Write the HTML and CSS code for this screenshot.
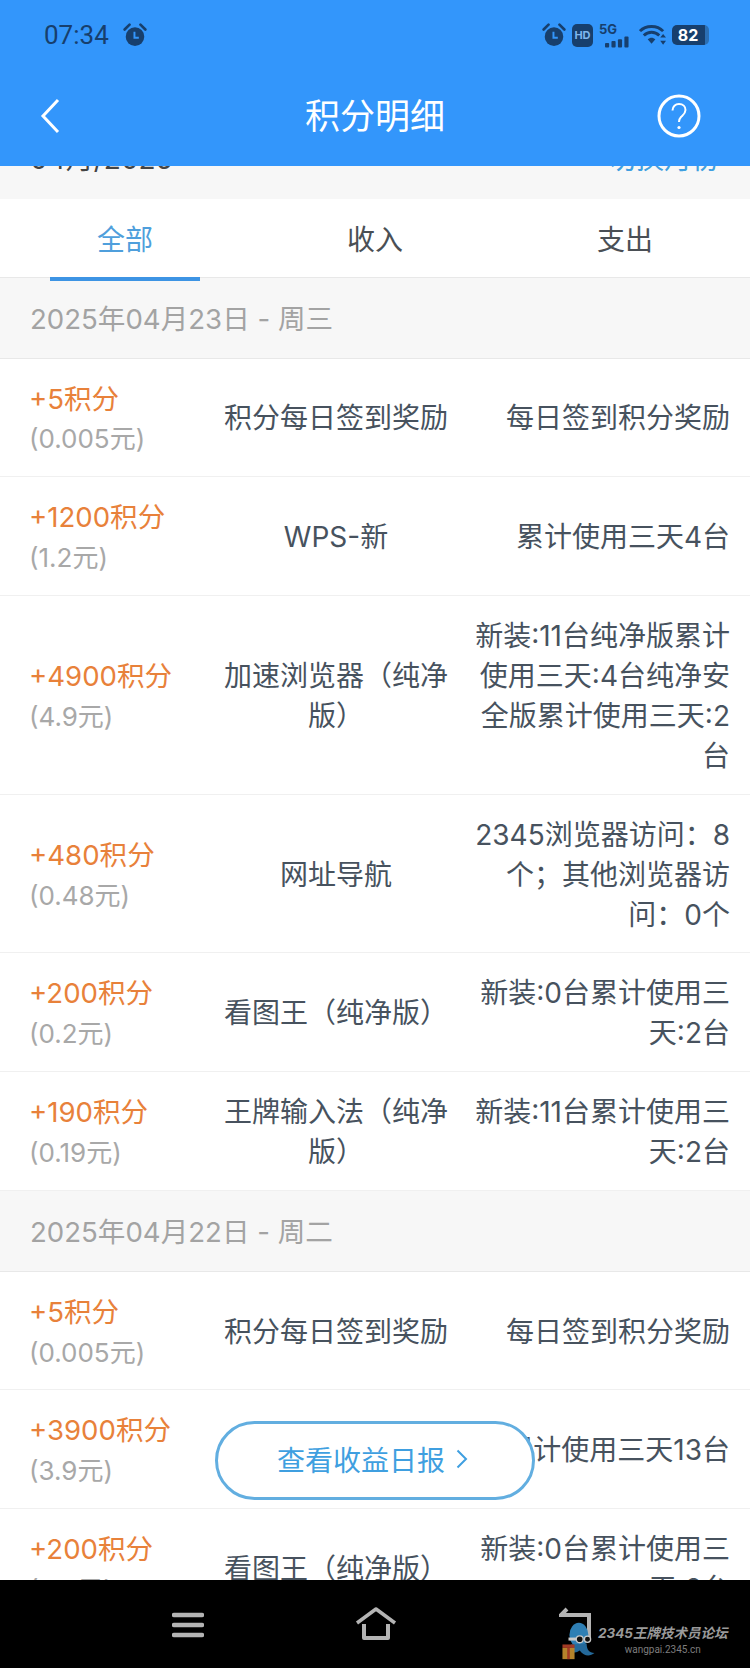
FILE: index.html
```html
<!DOCTYPE html>
<html lang="zh-CN">
<head>
    <meta charset="utf-8">
    <title>积分明细</title>
    <link rel="stylesheet" href="styles.css">
</head>
<body>
    <div class="page">
        <div class="top">
            <div class="status-bar">
                <div class="status-left">
                    <span class="time">07:34</span>
                    <svg class="alarm" width="24" height="24" viewBox="0 0 22 22">
                        <circle cx="11" cy="12.5" r="8.5" fill="#173f6d"/>
                        <path d="M1.5 6 L6 1.5 M20.5 6 L16 1.5" stroke="#173f6d" stroke-width="2.4" stroke-linecap="round"/>
                        <path d="M10.5 8 V13.5 H14.5" stroke="#3396fb" stroke-width="1.8" fill="none"/>
                    </svg>
                </div>
                <div class="status-right">
                    <svg class="alarm" width="24" height="24" viewBox="0 0 22 22">
                        <circle cx="11" cy="12.5" r="8.5" fill="#173f6d"/>
                        <path d="M1.5 6 L6 1.5 M20.5 6 L16 1.5" stroke="#173f6d" stroke-width="2.4" stroke-linecap="round"/>
                        <path d="M10.5 8 V13.5 H14.5" stroke="#3396fb" stroke-width="1.8" fill="none"/>
                    </svg>
                    <span class="hd">HD</span>
                    <div class="signal">
                        <span class="signal-label">5G</span>
                        <svg width="24" height="12" viewBox="0 0 26 12">
                            <rect x="0" y="7" width="4.5" height="5" rx="1" fill="#173f6d"/>
                            <rect x="7" y="5" width="4.5" height="7" rx="1" fill="#173f6d"/>
                            <rect x="14" y="3" width="4.5" height="9" rx="1" fill="#173f6d"/>
                            <rect x="21" y="0" width="4.5" height="12" rx="1" fill="#173f6d"/>
                        </svg>
                    </div>
                    <svg width="27" height="22" viewBox="0 0 28 22">
                        <path d="M1 7 C7 0.5 19 0.5 25 7" stroke="#173f6d" stroke-width="3" fill="none"/>
                        <path d="M5 11.5 C9.5 7 16.5 7 21 11.5" stroke="#173f6d" stroke-width="3" fill="none"/>
                        <path d="M9 15.5 C11.5 13.2 14.5 13.2 17 15.5 L13 20 Z" fill="#173f6d"/>
                        <path d="M25 10 L28 13.5 H22 Z M25 21 L28 17 H22 Z" fill="#173f6d"/>
                    </svg>
                    <div class="battery"><span class="battery-level">82</span></div>
                </div>
            </div>
            <div class="title-bar">
                <svg class="back" width="20" height="36" viewBox="0 0 20 36">
                    <path d="M18 2 L3 18 L18 34" stroke="#fff" stroke-width="3" fill="none"/>
                </svg>
                <h1 class="title">积分明细</h1>
                <svg class="help" width="44" height="44" viewBox="0 0 44 44">
                    <circle cx="22" cy="22" r="20" stroke="#fff" stroke-width="3" fill="none"/>
                    <path d="M15.5 16.5 C15.5 12.5 18.5 10 22 10 C26 10 28.5 12.5 28.5 16 C28.5 19.5 26 21 24 23 C22.5 24.5 22 25.5 22 28" stroke="#fff" stroke-width="2" fill="none"/>
                    <circle cx="22" cy="33.5" r="1.6" fill="#fff"/>
                </svg>
            </div>
        </div>

        <div class="content">
            <div class="month-bar">
                <span class="month">04月/2025</span>
                <span class="month-switch">切换月份</span>
            </div>
            <div class="tabs">
                <div class="tab tab-active">全部</div>
                <div class="tab">收入</div>
                <div class="tab">支出</div>
            </div>

            <div class="day">2025年04月23日 - 周三</div>
            <div class="row">
                <div class="points"><div class="amount">+5积分</div><div class="cash">(0.005元)</div></div>
                <div class="name">积分每日签到奖励</div>
                <div class="desc">每日签到积分奖励</div>
            </div>
            <div class="row">
                <div class="points"><div class="amount">+1200积分</div><div class="cash">(1.2元)</div></div>
                <div class="name">WPS-新</div>
                <div class="desc">累计使用三天4台</div>
            </div>
            <div class="row">
                <div class="points"><div class="amount">+4900积分</div><div class="cash">(4.9元)</div></div>
                <div class="name">加速浏览器（纯净版）</div>
                <div class="desc">新装:11台纯净版累计使用三天:4台纯净安全版累计使用三天:2台</div>
            </div>
            <div class="row">
                <div class="points"><div class="amount">+480积分</div><div class="cash">(0.48元)</div></div>
                <div class="name">网址导航</div>
                <div class="desc">2345浏览器访问：8个；其他浏览器访问：0个</div>
            </div>
            <div class="row">
                <div class="points"><div class="amount">+200积分</div><div class="cash">(0.2元)</div></div>
                <div class="name">看图王（纯净版）</div>
                <div class="desc">新装:0台累计使用三天:2台</div>
            </div>
            <div class="row">
                <div class="points"><div class="amount">+190积分</div><div class="cash">(0.19元)</div></div>
                <div class="name">王牌输入法（纯净版）</div>
                <div class="desc">新装:11台累计使用三天:2台</div>
            </div>

            <div class="day">2025年04月22日 - 周二</div>
            <div class="row">
                <div class="points"><div class="amount">+5积分</div><div class="cash">(0.005元)</div></div>
                <div class="name">积分每日签到奖励</div>
                <div class="desc">每日签到积分奖励</div>
            </div>
            <div class="row">
                <div class="points"><div class="amount">+3900积分</div><div class="cash">(3.9元)</div></div>
                <div class="name">WPS-新</div>
                <div class="desc">累计使用三天13台</div>
            </div>
            <div class="row">
                <div class="points"><div class="amount">+200积分</div><div class="cash">(0.2元)</div></div>
                <div class="name">看图王（纯净版）</div>
                <div class="desc">新装:0台累计使用三天:2台</div>
            </div>

            <div class="report-btn">
                <span class="report-label">查看收益日报</span>
                <svg width="12" height="20" viewBox="0 0 12 20">
                    <path d="M1.5 1.5 L10 10 L1.5 18.5" stroke="#3f9fe0" stroke-width="2" fill="none"/>
                </svg>
            </div>
        </div>

        <div class="nav">
            <svg class="nav-menu" width="32" height="26" viewBox="0 0 32 26">
                <path d="M2 3 H30 M2 13 H30 M2 23 H30" stroke="#b4b4b4" stroke-width="4.5" stroke-linecap="round"/>
            </svg>
            <svg class="nav-home" width="42" height="34" viewBox="0 0 42 34">
                <path d="M2 16 L21 2 L40 16" stroke="#b4b4b4" stroke-width="3.5" fill="none" stroke-linejoin="round"/>
                <path d="M9 17 V31 H33 V17" stroke="#b4b4b4" stroke-width="4" fill="none" stroke-linejoin="round"/>
            </svg>
            <svg class="nav-back" width="36" height="34" viewBox="0 0 36 34">
                <path d="M8 2 L2 8 H30 V32" stroke="#b4b4b4" stroke-width="4" fill="none"/>
            </svg>
            <div class="mark">
                <svg class="mark-logo" width="40" height="38" viewBox="0 0 40 44">
                    <ellipse cx="21" cy="15" rx="11" ry="14" fill="#2f7fb4"/>
                    <path d="M12 26 C10 34 15 38 22 33 C27 40 34 40 39 36 C33 36 30 32 30 25 Z" fill="#24699a"/>
                    <circle cx="22" cy="20" r="4" fill="#111" stroke="#c9c9c9" stroke-width="1.5"/>
                    <circle cx="31" cy="20" r="3.6" fill="#111" stroke="#c9c9c9" stroke-width="1.5"/>
                    <rect x="9" y="18" width="9" height="3.5" fill="#c9c9c9"/>
                    <rect x="2" y="30" width="14" height="13" fill="#b4832b"/>
                    <rect x="7.5" y="30" width="3" height="13" fill="#a33a24"/>
                    <rect x="2" y="26" width="14" height="4" fill="#a33a24"/>
                </svg>
                <div class="mark-text">
                    <div class="mark-name">2345王牌技术员论坛</div>
                    <div class="mark-url">wangpai.2345.cn</div>
                </div>
            </div>
        </div>
    </div>
</body>
</html>
```

FILE: styles.css
```css
* {
    box-sizing: border-box;
}

body {
    margin: 0;
    font-family: Inter, "Noto Sans CJK SC", sans-serif;
    background-color: #fff;
}

.page {
    display: flex;
    flex-direction: column;
    width: 750px;
    height: 1668px;
    overflow: hidden;
}

.top {
    background-color: #3396fb;
    height: 166px;
    flex-shrink: 0;
}

.status-bar {
    display: flex;
    justify-content: space-between;
    align-items: center;
    height: 66px;
    padding: 4px 41px 0 44px;
    color: #173f6d;
}

.status-left,
.status-right {
    display: flex;
    align-items: center;
}

.status-left {
    gap: 14px;
}

.status-right {
    gap: 6px;
}

.time {
    font-family: Roboto, sans-serif;
    font-size: 26px;
}

.hd {
    width: 21px;
    height: 23px;
    background-color: #173f6d;
    color: #7fb6ee;
    border-radius: 5px;
    font-size: 11px;
    font-weight: 700;
    line-height: 23px;
    text-align: center;
}

.signal {
    display: flex;
    flex-direction: column;
    align-items: flex-start;
    width: 32px;
    margin-right: 2px;
}

.signal svg {
    margin-left: 6px;
}

.signal-label {
    font-size: 13px;
    font-weight: 700;
    line-height: 13px;
}

.battery {
    width: 37px;
    height: 20px;
    border-radius: 5px;
    background: linear-gradient(90deg, #173f6d 88%, #2b6fb4 88%);
    text-align: center;
}

.battery-level {
    display: block;
    width: 32px;
    color: #fff;
    font-size: 16px;
    font-weight: 700;
    line-height: 20px;
}

.title-bar {
    display: flex;
    justify-content: space-between;
    align-items: center;
    height: 100px;
    padding: 0 49px 0 40px;
    position: relative;
}

.title {
    margin: 0;
    color: #fff;
    font-size: 35px;
    font-weight: 400;
    position: absolute;
    left: 0;
    right: 0;
    top: 27px;
    line-height: 46px;
    text-align: center;
}

.content {
    flex: 1;
    min-height: 0;
    overflow: hidden;
    position: relative;
}

/* list is scrolled, only the bottom of this bar is visible */
.month-bar {
    display: flex;
    justify-content: space-between;
    align-items: center;
    height: 80px;
    margin-top: -47px;
    padding: 0 30px 0 30px;
    background-color: #f7f7f7;
    font-size: 28px;
    line-height: 40px;
}

.month {
    color: #444;
}

.month-switch {
    color: #3f9fe0;
}

.tabs {
    display: flex;
    height: 79px;
    background-color: #fff;
    border-bottom: 1px solid #e8e8e8;
}

.tab {
    flex: 1;
    color: #4a4f55;
    font-size: 28px;
    line-height: 82px;
    text-align: center;
    position: relative;
}

.tab-active {
    color: #4f9fdc;
}

.tab-active::after {
    content: "";
    position: absolute;
    left: 50px;
    bottom: -4px;
    width: 150px;
    height: 4px;
    background-color: #3d94e4;
}

.day {
    height: 80.5px;
    padding: 3px 0 0 30px;
    background-color: #f7f7f7;
    border-bottom: 1px solid #e8e8e8;
    color: #a3a3a3;
    font-size: 27.6px;
    line-height: 76px;
}

.row {
    display: grid;
    grid-template-columns: 170px 226px 1fr;
    column-gap: 24px;
    align-items: center;
    padding: 21px 20px 17px 29px;
    background-color: #fff;
    border-bottom: 1px solid #f0f0f0;
    font-size: 27.6px;
    line-height: 39.9px;
    color: #47525e;
}

.amount {
    color: #e8813a;
}

.cash {
    color: #a8a8a8;
    font-size: 26px;
}

.name,
.desc {
    font-size: 28px;
}

.name {
    text-align: center;
}

.desc {
    text-align: right;
}

.report-btn {
    position: absolute;
    left: 215px;
    top: 1255px;
    display: flex;
    justify-content: center;
    align-items: center;
    gap: 11px;
    width: 320px;
    height: 79px;
    padding: 0 5px 3px 0;
    background-color: #fff;
    border: 3px solid #62aee0;
    border-radius: 40px;
    color: #3f9fe0;
    font-size: 28px;
}

.nav {
    flex-shrink: 0;
    height: 88px;
    background-color: #000;
    position: relative;
    display: flex;
    align-items: flex-start;
}

.nav-menu {
    margin: 32px 0 0 172px;
}

.nav-home {
    margin: 27px 0 0 151px;
}

.nav-back {
    margin: 27px 0 0 162px;
}

/* forum watermark sits over the nav bar */
.mark {
    position: absolute;
    left: 558px;
    top: 42px;
    display: flex;
    align-items: center;
}

.mark-name {
    color: #9a9a9a;
    font-size: 13.5px;
    font-style: italic;
    font-weight: 700;
    line-height: 18px;
    white-space: nowrap;
}

.mark-url {
    color: #7d7d7d;
    font-family: Roboto, sans-serif;
    font-size: 10px;
    line-height: 16px;
    text-align: center;
}
```
